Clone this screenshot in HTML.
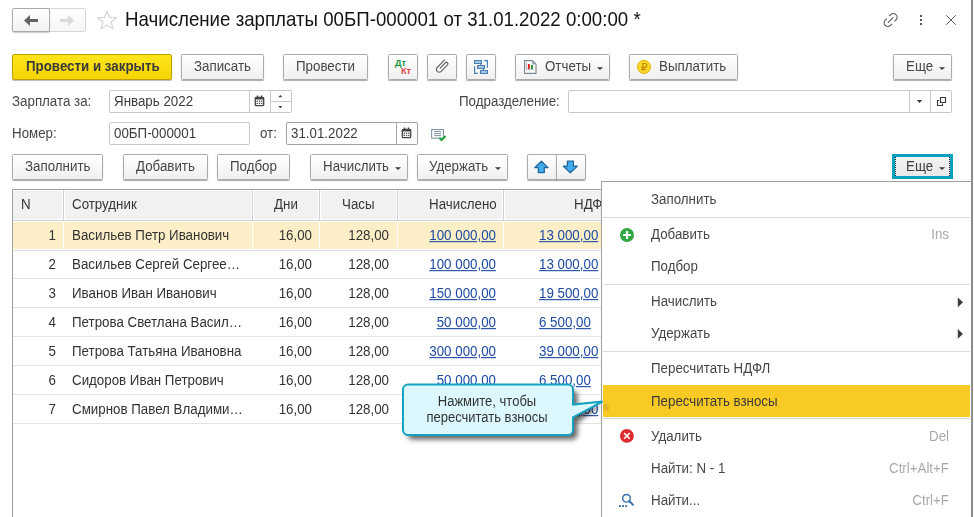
<!DOCTYPE html>
<html><head><meta charset="utf-8">
<style>
*{box-sizing:border-box;margin:0;padding:0}
html,body{width:974px;height:517px;overflow:hidden;background:#fff}
body{position:relative;font-family:"Liberation Sans",sans-serif;font-size:13.33px;color:#474747}
.a{position:absolute}
.t{position:absolute;white-space:nowrap;line-height:15px;transform:scaleY(1.1);transform-origin:0 12px}
.lnk{color:#1d4aa4;text-decoration:underline;text-underline-offset:1px}
svg{position:absolute}
</style></head><body>

<div class="a" style="left:12px;top:8px;width:74px;height:24px;border:1px solid #d6d6d6;border-radius:2px;background:linear-gradient(#fff,#f6f6f6)"></div>
<div class="a" style="left:12px;top:8px;width:38px;height:24px;border:1px solid #ababab;border-radius:2px;background:linear-gradient(#fff,#f2f2f2);box-shadow:0 1px 1px rgba(0,0,0,.2)"></div>
<svg style="left:0;top:0" width="125" height="40">
 <path d="M24 20.5 L30 15 L30 19 L38 19 L38 22 L30 22 L30 26 Z" fill="#646464"/>
 <path d="M74 20.5 L68 15 L68 19 L60 19 L60 22 L68 22 L68 26 Z" fill="#dadada"/>
 <path d="M107 11 L109.6 17.4 L116.4 17.7 L111.1 22 L113 28.7 L107 24.9 L101 28.7 L102.9 22 L97.6 17.7 L104.4 17.4 Z" fill="none" stroke="#d6d6d6" stroke-width="1.2" stroke-linejoin="round"/>
</svg>
<div class="t" style="left:125px;top:9px;font-size:18.7px;line-height:22px;color:#141414;transform:scaleY(1.08);transform-origin:0 17.5px">Начисление зарплаты 00БП-000001 от 31.01.2022 0:00:00 *</div>
<svg style="left:870px;top:0" width="100" height="40">
 <g fill="none" stroke="#5c5c5c" stroke-width="1" transform="translate(20.6 20) rotate(-45) scale(1.2)">
  <path d="M1.5 -3.1 L3.2 -3.1 A3.1 3.1 0 0 1 3.2 3.1 L1.5 3.1"/>
  <path d="M-1.5 -3.1 L-3.2 -3.1 A3.1 3.1 0 0 0 -3.2 3.1 L-1.5 3.1"/>
  <path d="M-3.1 0 L3.1 0"/>
 </g>
 <rect x="50" y="15" width="2" height="2" fill="#555"/><rect x="50" y="19" width="2" height="2" fill="#555"/><rect x="50" y="23" width="2" height="2" fill="#555"/>
 <path d="M76.2 15.2 L85.8 24.8 M85.8 15.2 L76.2 24.8" stroke="#5e5e5e" stroke-width="1"/>
</svg>
<div class="a" style="left:12px;top:54px;width:160px;height:26px;border:1px solid #bba000;border-radius:2px;background:linear-gradient(#ffe51e,#f6d400);box-shadow:0 1px 1px rgba(0,0,0,.28)"></div>
<div class="t" style="left:26px;top:59px;color:#3a3a3a;font-weight:bold;">Провести и закрыть</div>
<div class="a" style="left:181px;top:54px;width:83px;height:26px;border:1px solid #aaaaaa;border-radius:1.5px;background:linear-gradient(#ffffff,#f0f0f0);box-shadow:0 1px 1px rgba(0,0,0,.33);"></div>
<div class="t" style="left:194px;top:59px;">Записать</div>
<div class="a" style="left:283px;top:54px;width:85px;height:26px;border:1px solid #aaaaaa;border-radius:1.5px;background:linear-gradient(#ffffff,#f0f0f0);box-shadow:0 1px 1px rgba(0,0,0,.33);"></div>
<div class="t" style="left:296px;top:59px;">Провести</div>
<div class="a" style="left:388px;top:54px;width:30px;height:26px;border:1px solid #aaaaaa;border-radius:1.5px;background:linear-gradient(#ffffff,#f0f0f0);box-shadow:0 1px 1px rgba(0,0,0,.33);"></div>
<div class="a" style="left:427px;top:54px;width:30px;height:26px;border:1px solid #aaaaaa;border-radius:1.5px;background:linear-gradient(#ffffff,#f0f0f0);box-shadow:0 1px 1px rgba(0,0,0,.33);"></div>
<div class="a" style="left:466px;top:54px;width:30px;height:26px;border:1px solid #aaaaaa;border-radius:1.5px;background:linear-gradient(#ffffff,#f0f0f0);box-shadow:0 1px 1px rgba(0,0,0,.33);"></div>
<div class="a" style="left:515px;top:54px;width:95px;height:26px;border:1px solid #aaaaaa;border-radius:1.5px;background:linear-gradient(#ffffff,#f0f0f0);box-shadow:0 1px 1px rgba(0,0,0,.33);"></div>
<div class="t" style="left:545px;top:59px;">Отчеты</div>
<div class="a" style="left:629px;top:54px;width:109px;height:26px;border:1px solid #aaaaaa;border-radius:1.5px;background:linear-gradient(#ffffff,#f0f0f0);box-shadow:0 1px 1px rgba(0,0,0,.33);"></div>
<div class="t" style="left:659px;top:59px;">Выплатить</div>
<div class="a" style="left:893px;top:54px;width:59px;height:26px;border:1px solid #aaaaaa;border-radius:1.5px;background:linear-gradient(#ffffff,#f0f0f0);box-shadow:0 1px 1px rgba(0,0,0,.33);"></div>
<div class="t" style="left:906px;top:59px;">Еще</div>
<svg style="left:380px;top:50px" width="300" height="32">
 <text transform="translate(14.9 15.5) scale(1.1 1)" font-family="Liberation Sans" font-weight="bold" font-size="8.3px" fill="#17913e">Дт</text>
 <text transform="translate(20.9 24.1) scale(1.1 1)" font-family="Liberation Sans" font-weight="bold" font-size="8.4px" fill="#e04649">Кт</text>
 <g fill="none" stroke="#6a6a6a" stroke-width="1.2" transform="translate(62.1 16.4) rotate(-46)">
  <path d="M6.8 -2.8 L-4.2 -2.8 A2.8 2.8 0 0 0 -4.2 2.8 L4.9 2.8 A1.5 1.5 0 0 0 4.9 -0.2 L-3 -0.2"/>
 </g>
 <g stroke="#4a80b6" stroke-width="1.2" fill="#c3daef">
  <rect x="94.6" y="10.6" width="6.8" height="2.8"/>
  <rect x="97.6" y="15.6" width="6.8" height="2.8"/>
  <rect x="100.6" y="20.6" width="6.8" height="2.8"/>
 </g>
 <path d="M100.8 14 V15 M103.4 19 V20 M97.8 23.4 H94.6 V16.2 M104.2 10.6 H107.4 V17.7" fill="none" stroke="#4a80b6" stroke-width="1.2"/>
 <!-- report icon -->
 <path d="M144.6 10.6 L152.4 10.6 L156 14.2 L156 23.4 L144.6 23.4 Z" fill="#fff" stroke="#7d8a94" stroke-width="1.2"/>
 <path d="M152.2 10.8 L155.8 14.4 L152.2 14.4 Z" fill="#86a2b4"/>
 <rect x="147.9" y="14" width="1.9" height="4.9" fill="#e01818"/>
 <rect x="150.9" y="15" width="2" height="3.9" fill="#1c9a28"/>
 <path d="M146.4 12.4 L146.4 19.5 L153.8 19.5" fill="none" stroke="#9aa6b0" stroke-width=".8"/>
 <path d="M217 17.2 L223 17.2 L220 20 Z" fill="#3a3a3a"/>
 <!-- coin -->
 <circle cx="264" cy="16.9" r="6.6" fill="#f8d82a" stroke="#e2b90e" stroke-width="1"/>
 <path d="M262.9 21.1 L262.9 13.5 L264.9 13.5 A1.95 1.95 0 0 1 264.9 17.4 L261.3 17.4 M261.3 19.3 L265.6 19.3" fill="none" stroke="#c98600" stroke-width="1.15"/>
</svg>
<svg style="left:930px;top:60px" width="20" height="20"><path d="M9 7.2 L15 7.2 L12 10 Z" fill="#3a3a3a"/></svg>
<div class="t" style="left:12px;top:94px;">Зарплата за:</div>
<div class="a" style="left:109px;top:90px;width:141px;height:23px;border:1px solid #c9c9c9;border-right:none;border-radius:2px 0 0 2px;background:#fff"></div>
<div class="t" style="left:114px;top:94px;color:#3c3c3c;">Январь 2022</div>
<div class="a" style="left:249px;top:90px;width:22px;height:23px;border:1px solid #c9c9c9;background:#fff"></div>
<div class="a" style="left:271px;top:90px;width:21px;height:23px;border:1px solid #c9c9c9;border-left:none;border-radius:0 2px 2px 0;background:#fff"></div>
<div class="a" style="left:271px;top:101px;width:20px;height:1px;background:#c9c9c9"></div>
<svg style="left:249px;top:90px" width="44" height="23">
 <rect x="6.3" y="7.3" width="8.4" height="8.4" rx="1" fill="#fff" stroke="#454545" stroke-width="1.3"/>
 <rect x="6" y="7" width="9" height="2.5" fill="#454545"/>
 <rect x="7.8" y="5.5" width="1.4" height="2" fill="#454545"/><rect x="11.8" y="5.5" width="1.4" height="2" fill="#454545"/>
 <g fill="#454545"><rect x="7.6" y="10.6" width="1.3" height="1.3"/><rect x="9.9" y="10.6" width="1.3" height="1.3"/><rect x="12.2" y="10.6" width="1.3" height="1.3"/>
 <rect x="7.6" y="12.8" width="1.3" height="1.3"/><rect x="9.9" y="12.8" width="1.3" height="1.3"/><rect x="12.2" y="12.8" width="1.3" height="1.3"/></g>
 <path d="M29.3 7.2 L33.3 7.2 L31.3 5 Z M29.3 16 L33.3 16 L31.3 18.2 Z" fill="#3a3a3a"/>
</svg>
<div class="t" style="left:459px;top:94px;">Подразделение:</div>
<div class="a" style="left:568px;top:90px;width:384px;height:23px;border:1px solid #c9c9c9;border-radius:2px;background:#fff"></div>
<div class="a" style="left:909px;top:91px;width:1px;height:21px;background:#c9c9c9"></div>
<div class="a" style="left:930px;top:91px;width:1px;height:21px;background:#c9c9c9"></div>
<svg style="left:909px;top:90px" width="44" height="23">
 <path d="M7.8 9.9 L13.2 9.9 L10.5 13 Z" fill="#3a3a3a"/>
 <path d="M31.5 7.5 H36.5 V12.5 H31.5 Z M30 10.5 H28.5 V15.5 H33.5 V13.6" fill="none" stroke="#3a3a3a" stroke-width="1.15"/>
</svg>
<div class="t" style="left:12px;top:126px;">Номер:</div>
<div class="a" style="left:109px;top:122px;width:141px;height:23px;border:1px solid #c9c9c9;border-radius:2px;background:#fff"></div>
<div class="t" style="left:114px;top:126px;color:#3c3c3c;">00БП-000001</div>
<div class="t" style="left:260px;top:126px;">от:</div>
<div class="a" style="left:286px;top:122px;width:132px;height:23px;border:1px solid #a3a3a3;border-radius:2px;background:#fff"></div>
<div class="a" style="left:396px;top:123px;width:1px;height:21px;background:#a3a3a3"></div>
<div class="t" style="left:291px;top:126px;color:#3c3c3c;">31.01.2022</div>
<svg style="left:396px;top:122px" width="22" height="23">
 <rect x="6.3" y="7.3" width="8.4" height="8.4" rx="1" fill="#fff" stroke="#454545" stroke-width="1.3"/>
 <rect x="6" y="7" width="9" height="2.5" fill="#454545"/>
 <rect x="7.8" y="5.5" width="1.4" height="2" fill="#454545"/><rect x="11.8" y="5.5" width="1.4" height="2" fill="#454545"/>
 <g fill="#454545"><rect x="7.6" y="10.6" width="1.3" height="1.3"/><rect x="9.9" y="10.6" width="1.3" height="1.3"/><rect x="12.2" y="10.6" width="1.3" height="1.3"/>
 <rect x="7.6" y="12.8" width="1.3" height="1.3"/><rect x="9.9" y="12.8" width="1.3" height="1.3"/><rect x="12.2" y="12.8" width="1.3" height="1.3"/></g>
</svg>
<svg style="left:425px;top:122px" width="30" height="24">
 <rect x="6.6" y="7.6" width="11.9" height="8.6" fill="#fbfbfb" stroke="#8898aa" stroke-width="1.1"/>
 <path d="M9.2 9.6 L16 9.6 M9.2 11.6 L16 11.6 M9.2 13.6 L16 13.6" stroke="#8592a0" stroke-width="1"/>
 <path d="M14.3 15.9 L16.5 18.1 L20.6 14" fill="none" stroke="#21a43a" stroke-width="2"/>
</svg>
<div class="a" style="left:12px;top:154px;width:91px;height:26px;border:1px solid #aaaaaa;border-radius:1.5px;background:linear-gradient(#ffffff,#f0f0f0);box-shadow:0 1px 1px rgba(0,0,0,.33);"></div>
<div class="t" style="left:25px;top:159px;">Заполнить</div>
<div class="a" style="left:123px;top:154px;width:85px;height:26px;border:1px solid #aaaaaa;border-radius:1.5px;background:linear-gradient(#ffffff,#f0f0f0);box-shadow:0 1px 1px rgba(0,0,0,.33);"></div>
<div class="t" style="left:136px;top:159px;">Добавить</div>
<div class="a" style="left:217px;top:154px;width:73px;height:26px;border:1px solid #aaaaaa;border-radius:1.5px;background:linear-gradient(#ffffff,#f0f0f0);box-shadow:0 1px 1px rgba(0,0,0,.33);"></div>
<div class="t" style="left:230px;top:159px;">Подбор</div>
<div class="a" style="left:310px;top:154px;width:98px;height:26px;border:1px solid #aaaaaa;border-radius:1.5px;background:linear-gradient(#ffffff,#f0f0f0);box-shadow:0 1px 1px rgba(0,0,0,.33);"></div>
<div class="t" style="left:323px;top:159px;">Начислить</div>
<div class="a" style="left:417px;top:154px;width:91px;height:26px;border:1px solid #aaaaaa;border-radius:1.5px;background:linear-gradient(#ffffff,#f0f0f0);box-shadow:0 1px 1px rgba(0,0,0,.33);"></div>
<div class="t" style="left:429px;top:159px;">Удержать</div>
<div class="a" style="left:527px;top:154px;width:30px;height:26px;border:1px solid #aaaaaa;border-radius:1.5px;background:linear-gradient(#ffffff,#f0f0f0);box-shadow:0 1px 1px rgba(0,0,0,.33);border-radius:2px 0 0 2px"></div>
<div class="a" style="left:556px;top:154px;width:30px;height:26px;border:1px solid #aaaaaa;border-radius:1.5px;background:linear-gradient(#ffffff,#f0f0f0);box-shadow:0 1px 1px rgba(0,0,0,.33);border-radius:0 2px 2px 0"></div>
<svg style="left:300px;top:150px" width="300" height="32">
 <path d="M95 17.2 L101 17.2 L98 20 Z" fill="#3a3a3a"/>
 <path d="M195 17.2 L201 17.2 L198 20 Z" fill="#3a3a3a"/>
 <path d="M241.4 11.2 L248 17.6 L244.3 17.6 L244.3 22.5 L238.3 22.5 L238.3 17.6 L234.7 17.6 Z" fill="#42abeb" stroke="#1d679c" stroke-width="1.25" stroke-linejoin="round"/>
 <path d="M267.4 11.2 L273.4 11.2 L273.4 16.2 L277.2 16.2 L270.3 22.8 L263.5 16.2 L267.4 16.2 Z" fill="#42abeb" stroke="#1d679c" stroke-width="1.25" stroke-linejoin="round"/>
</svg>
<div class="a" style="left:892px;top:154px;width:61px;height:25px;border:3px solid #09a0c2;background:#fff"></div>
<div class="a" style="left:895px;top:157px;width:55px;height:19px;background:linear-gradient(#f3f3f3,#e9e9e9);border-left:1px dotted #222;border-right:1px dotted #222"></div>
<div class="t" style="left:906px;top:159px;color:#3c3c3c;">Еще</div>
<svg style="left:930px;top:160px" width="20" height="20"><path d="M9 7.2 L15 7.2 L12 10 Z" fill="#3a3a3a"/></svg>
<div class="a" style="left:12px;top:189px;width:590px;height:1px;background:#a2a2a2"></div>
<div class="a" style="left:12px;top:189px;width:1px;height:328px;background:#a0a0a0"></div>
<div class="a" style="left:13px;top:190px;width:589px;height:30px;background:#fff"></div>
<div class="a" style="left:13px;top:191px;width:589px;height:28px;background:#f1f1f1"></div>
<div class="a" style="left:13px;top:220px;width:589px;height:1px;background:#cfcfcf"></div>
<div class="a" style="left:62px;top:190px;width:3px;height:30px;background:#fff"></div>
<div class="a" style="left:63px;top:190px;width:1px;height:30px;background:#cfcfcf"></div>
<div class="a" style="left:251px;top:190px;width:3px;height:30px;background:#fff"></div>
<div class="a" style="left:252px;top:190px;width:1px;height:30px;background:#cfcfcf"></div>
<div class="a" style="left:318px;top:190px;width:3px;height:30px;background:#fff"></div>
<div class="a" style="left:319px;top:190px;width:1px;height:30px;background:#cfcfcf"></div>
<div class="a" style="left:396px;top:190px;width:3px;height:30px;background:#fff"></div>
<div class="a" style="left:397px;top:190px;width:1px;height:30px;background:#cfcfcf"></div>
<div class="a" style="left:502px;top:190px;width:3px;height:30px;background:#fff"></div>
<div class="a" style="left:503px;top:190px;width:1px;height:30px;background:#cfcfcf"></div>
<div class="t" style="left:21px;top:197px;color:#363636;">N</div>
<div class="t" style="left:72px;top:197px;color:#363636;">Сотрудник</div>
<div class="t" style="left:274px;top:197px;color:#363636;">Дни</div>
<div class="t" style="left:342px;top:197px;color:#363636;">Часы</div>
<div class="t" style="left:429px;top:197px;color:#363636;">Начислено</div>
<div class="t" style="left:574px;top:197px;color:#363636;">НДФЛ</div>
<div class="a" style="left:13px;top:222px;width:589px;height:27px;background:#fcefc8"></div>
<div class="a" style="left:63px;top:221px;width:1px;height:29px;background:#fff"></div>
<div class="a" style="left:252px;top:221px;width:1px;height:29px;background:#fff"></div>
<div class="a" style="left:319px;top:221px;width:1px;height:29px;background:#fff"></div>
<div class="a" style="left:397px;top:221px;width:1px;height:29px;background:#fff"></div>
<div class="a" style="left:503px;top:221px;width:1px;height:29px;background:#fff"></div>
<div class="a" style="left:13px;top:250px;width:589px;height:1px;background:#e3e3e3"></div>
<div class="a" style="left:13px;top:278px;width:589px;height:1px;background:#e3e3e3"></div>
<div class="a" style="left:13px;top:307px;width:589px;height:1px;background:#e3e3e3"></div>
<div class="a" style="left:13px;top:336px;width:589px;height:1px;background:#e3e3e3"></div>
<div class="a" style="left:13px;top:365px;width:589px;height:1px;background:#e3e3e3"></div>
<div class="a" style="left:13px;top:394px;width:589px;height:1px;background:#e3e3e3"></div>
<div class="a" style="left:13px;top:423px;width:589px;height:1px;background:#e3e3e3"></div>
<div class="t" style="left:16px;top:228px;width:40px;text-align:right;color:#333;">1</div>
<div class="t" style="left:72px;top:228px;color:#333;">Васильев Петр Иванович</div>
<div class="t" style="left:252px;top:228px;width:60px;text-align:right;color:#333;">16,00</div>
<div class="t" style="left:329px;top:228px;width:60px;text-align:right;color:#333;">128,00</div>
<div class="t" style="left:406px;top:228px;width:90px;text-align:right;"><span class="lnk">100 000,00</span></div>
<div class="t" style="left:539px;top:228px;"><span class="lnk">13 000,00</span></div>
<div class="t" style="left:16px;top:257px;width:40px;text-align:right;color:#333;">2</div>
<div class="t" style="left:72px;top:257px;color:#333;">Васильев Сергей Сергее…</div>
<div class="t" style="left:252px;top:257px;width:60px;text-align:right;color:#333;">16,00</div>
<div class="t" style="left:329px;top:257px;width:60px;text-align:right;color:#333;">128,00</div>
<div class="t" style="left:406px;top:257px;width:90px;text-align:right;"><span class="lnk">100 000,00</span></div>
<div class="t" style="left:539px;top:257px;"><span class="lnk">13 000,00</span></div>
<div class="t" style="left:16px;top:286px;width:40px;text-align:right;color:#333;">3</div>
<div class="t" style="left:72px;top:286px;color:#333;">Иванов Иван Иванович</div>
<div class="t" style="left:252px;top:286px;width:60px;text-align:right;color:#333;">16,00</div>
<div class="t" style="left:329px;top:286px;width:60px;text-align:right;color:#333;">128,00</div>
<div class="t" style="left:406px;top:286px;width:90px;text-align:right;"><span class="lnk">150 000,00</span></div>
<div class="t" style="left:539px;top:286px;"><span class="lnk">19 500,00</span></div>
<div class="t" style="left:16px;top:315px;width:40px;text-align:right;color:#333;">4</div>
<div class="t" style="left:72px;top:315px;color:#333;">Петрова Светлана Васил…</div>
<div class="t" style="left:252px;top:315px;width:60px;text-align:right;color:#333;">16,00</div>
<div class="t" style="left:329px;top:315px;width:60px;text-align:right;color:#333;">128,00</div>
<div class="t" style="left:406px;top:315px;width:90px;text-align:right;"><span class="lnk">50 000,00</span></div>
<div class="t" style="left:539px;top:315px;"><span class="lnk">6 500,00</span></div>
<div class="t" style="left:16px;top:344px;width:40px;text-align:right;color:#333;">5</div>
<div class="t" style="left:72px;top:344px;color:#333;">Петрова Татьяна Ивановна</div>
<div class="t" style="left:252px;top:344px;width:60px;text-align:right;color:#333;">16,00</div>
<div class="t" style="left:329px;top:344px;width:60px;text-align:right;color:#333;">128,00</div>
<div class="t" style="left:406px;top:344px;width:90px;text-align:right;"><span class="lnk">300 000,00</span></div>
<div class="t" style="left:539px;top:344px;"><span class="lnk">39 000,00</span></div>
<div class="t" style="left:16px;top:373px;width:40px;text-align:right;color:#333;">6</div>
<div class="t" style="left:72px;top:373px;color:#333;">Сидоров Иван Петрович</div>
<div class="t" style="left:252px;top:373px;width:60px;text-align:right;color:#333;">16,00</div>
<div class="t" style="left:329px;top:373px;width:60px;text-align:right;color:#333;">128,00</div>
<div class="t" style="left:406px;top:373px;width:90px;text-align:right;"><span class="lnk">50 000,00</span></div>
<div class="t" style="left:539px;top:373px;"><span class="lnk">6 500,00</span></div>
<div class="t" style="left:16px;top:402px;width:40px;text-align:right;color:#333;">7</div>
<div class="t" style="left:72px;top:402px;color:#333;">Смирнов Павел Владими…</div>
<div class="t" style="left:252px;top:402px;width:60px;text-align:right;color:#333;">16,00</div>
<div class="t" style="left:329px;top:402px;width:60px;text-align:right;color:#333;">128,00</div>
<div class="t" style="left:406px;top:402px;width:90px;text-align:right;"><span class="lnk">50 000,00</span></div>
<div class="t" style="left:539px;top:402px;"><span class="lnk">13 000,00</span></div>
<div class="a" style="left:601px;top:181px;width:372px;height:340px;border:1px solid #9f9f9f;background:#fff"></div>
<div class="t" style="left:651px;top:192px;">Заполнить</div>
<div class="a" style="left:603px;top:217px;width:367px;height:1px;background:#d9d9d9"></div>
<div class="t" style="left:651px;top:227px;">Добавить</div>
<div class="t" style="left:889px;top:227px;width:60px;text-align:right;color:#a9a9a9;">Ins</div>
<div class="t" style="left:651px;top:259px;">Подбор</div>
<div class="a" style="left:603px;top:284px;width:367px;height:1px;background:#d9d9d9"></div>
<div class="t" style="left:651px;top:294px;">Начислить</div>
<div class="t" style="left:651px;top:326px;">Удержать</div>
<div class="a" style="left:603px;top:351px;width:367px;height:1px;background:#d9d9d9"></div>
<div class="t" style="left:651px;top:361px;">Пересчитать НДФЛ</div>
<div class="a" style="left:603px;top:385px;width:367px;height:32px;background:#f9ca24"></div>
<div class="t" style="left:651px;top:394px;color:#3a3a3a;">Пересчитать взносы</div>
<div class="a" style="left:603px;top:418px;width:367px;height:1px;background:#d9d9d9"></div>
<div class="t" style="left:651px;top:429px;">Удалить</div>
<div class="t" style="left:889px;top:429px;width:60px;text-align:right;color:#a9a9a9;">Del</div>
<div class="t" style="left:651px;top:461px;">Найти: N - 1</div>
<div class="t" style="left:859px;top:461px;width:90px;text-align:right;color:#a9a9a9;">Ctrl+Alt+F</div>
<div class="t" style="left:651px;top:493px;">Найти...</div>
<div class="t" style="left:859px;top:493px;width:90px;text-align:right;color:#a9a9a9;">Ctrl+F</div>
<svg style="left:600px;top:180px" width="374" height="337">
 <path d="M357.8 117.4 L363 122.3 L357.8 127.2 Z M357.8 149 L363 153.9 L357.8 158.8 Z" fill="#3c3c3c"/>
 <circle cx="6" cy="227.5" r="3.2" fill="#c9a820" opacity=".55"/>
 <circle cx="27" cy="55" r="7" fill="#31a840"/>
 <path d="M23 55 L31 55 M27 51 L27 59" stroke="#fff" stroke-width="2.2"/>
 <circle cx="26.9" cy="255.9" r="6.9" fill="#dd2c30"/>
 <path d="M24.1 253.1 L29.7 258.7 M29.7 253.1 L24.1 258.7" stroke="#fff" stroke-width="1.5"/>
 <circle cx="26.5" cy="318.3" r="3.8" fill="none" stroke="#2f6db0" stroke-width="1.4"/>
 <path d="M29.2 321 L33 324.8" stroke="#2f6db0" stroke-width="1.9" stroke-linecap="round"/>
 <rect x="19" y="325.2" width="1.8" height="1.8" fill="#2a629c"/><rect x="22.2" y="325.2" width="1.8" height="1.8" fill="#2a629c"/><rect x="25.3" y="325.2" width="1.8" height="1.8" fill="#2a629c"/>
</svg>
<svg style="left:396px;top:378px" width="214" height="70">
 <defs><filter id="sh" x="-20%" y="-30%" width="140%" height="170%"><feGaussianBlur stdDeviation="2.6"/></filter></defs>
 <path d="M12 8 H172 a5 5 0 0 1 5 5 V26 L200 23 L177 40 V52 a5 5 0 0 1 -5 5 H12 a5 5 0 0 1 -5 -5 V13 a5 5 0 0 1 5 -5 Z" transform="translate(4.5 4.5)" fill="rgba(0,0,0,.6)" filter="url(#sh)"/>
 <path d="M12 6.5 H172 a5 5 0 0 1 5 5 V26.6 L206.5 23.6 L177 39.4 V52 a5 5 0 0 1 -5 5 H12 a5 5 0 0 1 -5 -5 V11.5 a5 5 0 0 1 5 -5 Z" fill="#dcf8fe" stroke="#15a1c0" stroke-width="2"/>
</svg>
<div class="t" style="left:407.0px;top:394px;width:160px;text-align:center;color:#333;font-size:13px">Нажмите, чтобы</div>
<div class="t" style="left:407.0px;top:410px;width:160px;text-align:center;color:#333;font-size:13px">пересчитать взносы</div>
<div class="a" style="left:971px;top:0px;width:2px;height:517px;background:#8d8d8d"></div>
</body></html>
